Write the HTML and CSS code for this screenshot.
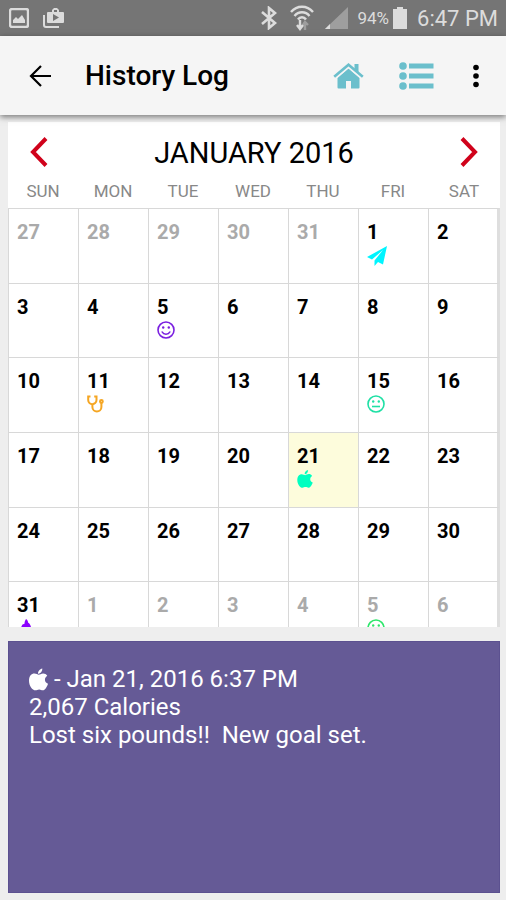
FILE: index.html
```html
<!DOCTYPE html>
<html lang="en">

<head>
    <meta charset="UTF-8">
    <meta name="viewport" content="width=device-width, initial-scale=1.0">
    <title>History Log</title>
    <link rel="stylesheet" href="styles.css">
</head>

<body>
    <!-- shared icons -->
    <svg class="sprite" aria-hidden="true">
        <symbol id="apple" viewBox="0 0 18 21">
            <path d="M12.600 0c.2 2.600-1.700 4.900-4 5C8.300 2.700 10.300.4 12.600 0zM9.300 6c.9 0 2.200-1.200 4.100-1.200 1.600 0 3 .8 3.900 2.100-3.200 2-2.800 6.200.7 7.600-.9 2.800-2.800 6.200-4.900 6.200-1.400 0-2-.8-3.500-.8s-2.200.8-3.500.8C3.200 20.700 0 16.400 0 11.600 0 7.300 2.400 4.900 5.100 4.900 6.900 4.900 8.300 6 9.300 6z" />
        </symbol>
        <symbol id="smile" viewBox="0 0 18 18">
            <g fill="none" stroke="currentColor" stroke-width="1.600" stroke-linecap="round">
                <circle cx="9" cy="9" r="8" />
                <path d="M5.200 11c1.400 2.900 6.200 2.900 7.600 0" />
            </g>
            <circle cx="6.200" cy="6.500" r="1.200" />
            <circle cx="11.800" cy="6.500" r="1.200" />
        </symbol>
    </svg>

    <div class="status-bar">
        <div class="status-left">
            <svg width="20" height="20" viewBox="0 0 20 20">
                <rect x="1" y="1" width="18" height="18" rx="2" fill="none" stroke="currentColor" stroke-width="2.400" />
                <path d="M4 15v-3l3-3 2 2 4-4 3 5v3z" />
            </svg>
            <svg width="22" height="20" viewBox="0 0 22 20">
                <path d="M1 7v10a2 2 0 0 0 2 2h13" fill="none" stroke="currentColor" stroke-width="2" />
                <path fill-rule="evenodd" d="M5 4h4V2l2-2h3l2 2v2h4a1 1 0 0 1 1 1v9a1 1 0 0 1-1 1H5a1 1 0 0 1-1-1V5a1 1 0 0 1 1-1zm6-2v2h3V2zm-1 4v7l6-3.500z" />
            </svg>
        </div>
        <div class="status-right">
            <svg width="16" height="24" viewBox="0 0 16 24">
                <path d="M1 6l13 11-6 5V2l6 5L1 18" fill="none" stroke="currentColor" stroke-width="2.600" />
            </svg>
            <svg class="wifi" width="24" height="26" viewBox="0 0 24 26">
                <g fill="none" stroke="currentColor" stroke-width="2.400">
                    <path d="M1 7c6-7 16-7 22 0M4.500 11c4-5 11-5 15 0M8 14.500c2-3 6-3 8 0" />
                    <path d="M10 15v8M7 20l3 4 3-4" />
                    <path d="M15 25v-8M13 20l2-3 3 3" opacity=".4" />
                </g>
            </svg>
            <svg class="signal" width="24" height="22" viewBox="0 0 24 22">
                <path d="M23 0v22H0z" opacity=".4" />
                <path d="M5 17v5H0z" />
            </svg>
            <span class="battery-level">94%</span>
            <svg class="battery" width="16" height="22" viewBox="0 0 16 22">
                <path d="M5 0h6v2h4v20H1V2h4z" />
            </svg>
            <span class="clock">6:47 PM</span>
        </div>
    </div>

    <header class="app-bar">
        <button class="icon-button" aria-label="Back">
            <svg class="line-icon" width="22" height="22" viewBox="0 0 22 22" stroke="currentColor" stroke-width="2.200">
                <path d="M22 11H2M12 1L2 11l10 10" />
            </svg>
        </button>
        <h1 class="app-title">History Log</h1>
        <button class="icon-button home" aria-label="Home">
            <svg width="31" height="26" viewBox="0 0 31 26">
                <path d="M15.500 5.500L26.500 15v9.500a1 1 0 0 1-1 1H18V18h-5v7.500H5.500a1 1 0 0 1-1-1V15z" />
                <path d="M1.200 14.200L15.500 2l14.300 12.200" fill="none" stroke="#f5f5f5" stroke-width="5" />
                <path d="M21.500 1h4v9l-4-3.500z" />
                <path d="M1.200 13.800L15.500 1.700l14.300 12.100" fill="none" stroke="currentColor" stroke-width="2.600" />
            </svg>
        </button>
        <button class="icon-button list" aria-label="List">
            <svg width="35" height="28" viewBox="0 0 35 28">
                <circle cx="4" cy="4" r="3.800" />
                <circle cx="4" cy="14" r="3.800" />
                <circle cx="4" cy="24" r="3.800" />
                <path d="M10 1.500h24.500v5H10zM10 11.500h24.500v5H10zM10 21.500h24.500v5H10z" />
            </svg>
        </button>
        <button class="icon-button menu" aria-label="More options">
            <svg width="8" height="24" viewBox="0 0 8 24">
                <circle cx="4" cy="3.500" r="2.800" />
                <circle cx="4" cy="12" r="2.800" />
                <circle cx="4" cy="20.500" r="2.800" />
            </svg>
        </button>
    </header>

    <main class="content">
        <section class="calendar">
            <div class="month-bar">
                <button class="arrow" aria-label="Previous month">
                    <svg class="line-icon" width="18" height="30" viewBox="0 0 18 30" stroke="currentColor" stroke-width="4">
                        <path d="M16 1.500L3 15l13 13.500" />
                    </svg>
                </button>
                <h2 class="month">JANUARY 2016</h2>
                <button class="arrow" aria-label="Next month">
                    <svg class="line-icon" width="18" height="30" viewBox="0 0 18 30" stroke="currentColor" stroke-width="4">
                        <path d="M2 1.500L15 15 2 28.500" />
                    </svg>
                </button>
            </div>
            <table class="days">
                <colgroup>
                    <col class="day-col" span="6">
                    <col>
                </colgroup>
                <thead>
                    <tr>
                        <th>SUN</th>
                        <th>MON</th>
                        <th>TUE</th>
                        <th>WED</th>
                        <th>THU</th>
                        <th>FRI</th>
                        <th>SAT</th>
                    </tr>
                </thead>
                <tbody>
                    <tr>
                        <td class="other">27</td>
                        <td class="other">28</td>
                        <td class="other">29</td>
                        <td class="other">30</td>
                        <td class="other">31</td>
                        <td>1
                            <svg class="mark plane" viewBox="0 0 20 20">
                                <path d="M20 0L0 11l5 2.500L16 4 7.500 14.500V20l3.500-4 5 2.500z" />
                            </svg>
                        </td>
                        <td>2</td>
                    </tr>
                    <tr>
                        <td>3</td>
                        <td>4</td>
                        <td>5
                            <svg class="mark good"><use href="#smile" /></svg>
                        </td>
                        <td>6</td>
                        <td>7</td>
                        <td>8</td>
                        <td>9</td>
                    </tr>
                    <tr>
                        <td>10</td>
                        <td>11
                            <svg class="mark doctor" viewBox="0 0 18 18">
                                <g fill="none" stroke="currentColor" stroke-width="2">
                                    <path d="M3.500 1.500H1.200V5c0 5.500 8.300 5.500 8.300 0V1.500H7.200" />
                                    <path d="M5.400 9v3c0 6 9 6 9 0V8" />
                                    <circle cx="14.400" cy="6.500" r="1.400" />
                                </g>
                            </svg>
                        </td>
                        <td>12</td>
                        <td>13</td>
                        <td>14</td>
                        <td>15
                            <svg class="mark neutral" viewBox="0 0 18 18">
                                <g fill="none" stroke="currentColor" stroke-width="1.600">
                                    <circle cx="9" cy="9" r="8" />
                                    <path d="M5 11.500h8" />
                                </g>
                                <circle cx="6.200" cy="6.500" r="1.200" />
                                <circle cx="11.800" cy="6.500" r="1.200" />
                            </svg>
                        </td>
                        <td>16</td>
                    </tr>
                    <tr>
                        <td>17</td>
                        <td>18</td>
                        <td>19</td>
                        <td>20</td>
                        <td class="selected">21
                            <svg class="mark food"><use href="#apple" /></svg>
                        </td>
                        <td>22</td>
                        <td>23</td>
                    </tr>
                    <tr>
                        <td>24</td>
                        <td>25</td>
                        <td>26</td>
                        <td>27</td>
                        <td>28</td>
                        <td>29</td>
                        <td>30</td>
                    </tr>
                    <tr>
                        <td>31
                            <svg class="mark flame" viewBox="0 0 18 18">
                                <path d="M9 0c1.600 1 2 2.500 2.200 3.800 1.200.6 2.300 2 2.800 4.200 1 4.500-1 9-5 9s-6.500-4-5-8c.3-1.500.8-2.500 1.500-3.500L7.500 4.800C7.500 3 8 1.500 9 0z" />
                            </svg>
                        </td>
                        <td class="other">1</td>
                        <td class="other">2</td>
                        <td class="other">3</td>
                        <td class="other">4</td>
                        <td class="other">5
                            <svg class="mark great"><use href="#smile" /></svg>
                        </td>
                        <td class="other">6</td>
                    </tr>
                </tbody>
            </table>
        </section>

        <section class="note">
            <p><svg class="note-icon"><use href="#apple" /></svg> - Jan 21, 2016 6:37 PM</p>
            <p>2,067 Calories</p>
            <p>Lost six pounds!!&nbsp; New goal set.</p>
        </section>
    </main>
</body>

</html>
```

FILE: styles.css
```css
* {
    box-sizing: border-box;
}

body {
    margin: 0;
    height: 100vh;
    display: flex;
    flex-direction: column;
    overflow: hidden;
    background-color: #eee;
    color: #000;
    font-family: Roboto, "Noto Sans", sans-serif;
}

svg {
    fill: currentColor;
    flex-shrink: 0;
}

.line-icon {
    fill: none;
}

button {
    padding: 0;
    border: 0;
    background: none;
    color: inherit;
    cursor: pointer;
}

h1,
h2,
p {
    margin: 0;
}

.sprite {
    position: absolute;
    width: 0;
    height: 0;
}

/* status bar */
.status-bar {
    display: flex;
    justify-content: space-between;
    height: 36px;
    padding: 0 8px 0 9px;
    background-color: #757575;
    color: #dcdcdc;
}

.status-left,
.status-right {
    display: flex;
    align-items: center;
}

.status-left {
    gap: 14px;
}

.wifi {
    margin-left: 13px;
}

.signal {
    margin-left: 11px;
}

.battery-level {
    margin-left: 8px;
    font-size: 17px;
}

.battery {
    margin-left: 3px;
}

.clock {
    margin-left: 9px;
    font-size: 22px;
}

/* app bar */
.app-bar {
    display: flex;
    align-items: center;
    flex-shrink: 0;
    height: 79px;
    padding: 0 26px 0 29px;
    background-color: #f5f5f5;
    box-shadow: 0 2px 6px rgba(0, 0, 0, 0.5);
    z-index: 1;
}

.icon-button {
    display: flex;
}

.app-title {
    flex: 1;
    margin-left: 34px;
    font-size: 28px;
    font-weight: 500;
}

.home,
.list {
    color: #6bbfcc;
}

.list {
    margin-left: 35px;
}

.menu {
    margin-left: 38px;
}

.content {
    flex: 1;
    display: grid;
    grid-template-rows: minmax(0, 2fr) minmax(0, 1fr);
    gap: 14px;
    min-height: 0;
    padding: 7px 6px 7px 8px;
}

/* calendar */
.calendar {
    overflow: hidden;
    background-color: #fff;
}

.month-bar {
    display: flex;
    align-items: center;
    justify-content: space-between;
    height: 60px;
    padding: 0 22px;
}

.arrow {
    display: flex;
    color: #d0021b;
}

.month {
    padding-top: 2px;
    font-size: 29px;
    font-weight: 400;
}

.days {
    width: 100%;
    height: 474px;
    table-layout: fixed;
    border-collapse: separate;
    border-spacing: 0;
}

.day-col {
    width: 70px;
}

.days th {
    height: 26px;
    padding: 0 0 8px;
    color: #888;
    font-size: 17px;
    line-height: 18px;
    font-weight: 400;
}

.days td {
    height: 74px;
    padding: 11px 0 0 8px;
    border-top: 1px solid #d8d8d8;
    border-left: 1px solid #d8d8d8;
    vertical-align: top;
    font-size: 20px;
    line-height: 24px;
    font-weight: 700;
}

.days td:last-child {
    border-right: 3px solid #dedede;
}

.days .other {
    color: #aaa;
}

.days .selected {
    background-color: #fdfcdc;
}

.mark {
    display: block;
    width: 18px;
    height: 18px;
    margin-top: 2px;
}

.plane {
    width: 20px;
    height: 20px;
    color: #00f5ff;
}

.good {
    color: #7a1fe0;
}

.doctor {
    color: #f5a623;
}

.neutral {
    color: #1fe0a5;
}

.food {
    width: 16px;
    color: #00ffc0;
}

.flame {
    color: #8b00ff;
}

.days .great {
    color: #2ee66b;
}

/* selected day details */
.note {
    padding: 23px 20px;
    border: 1px solid #5c5190;
    background-color: #655a96;
    color: #fff;
    font-size: 24px;
    line-height: 28px;
}

.note-icon {
    width: 19px;
    height: 23px;
    vertical-align: -4px;
}
```
